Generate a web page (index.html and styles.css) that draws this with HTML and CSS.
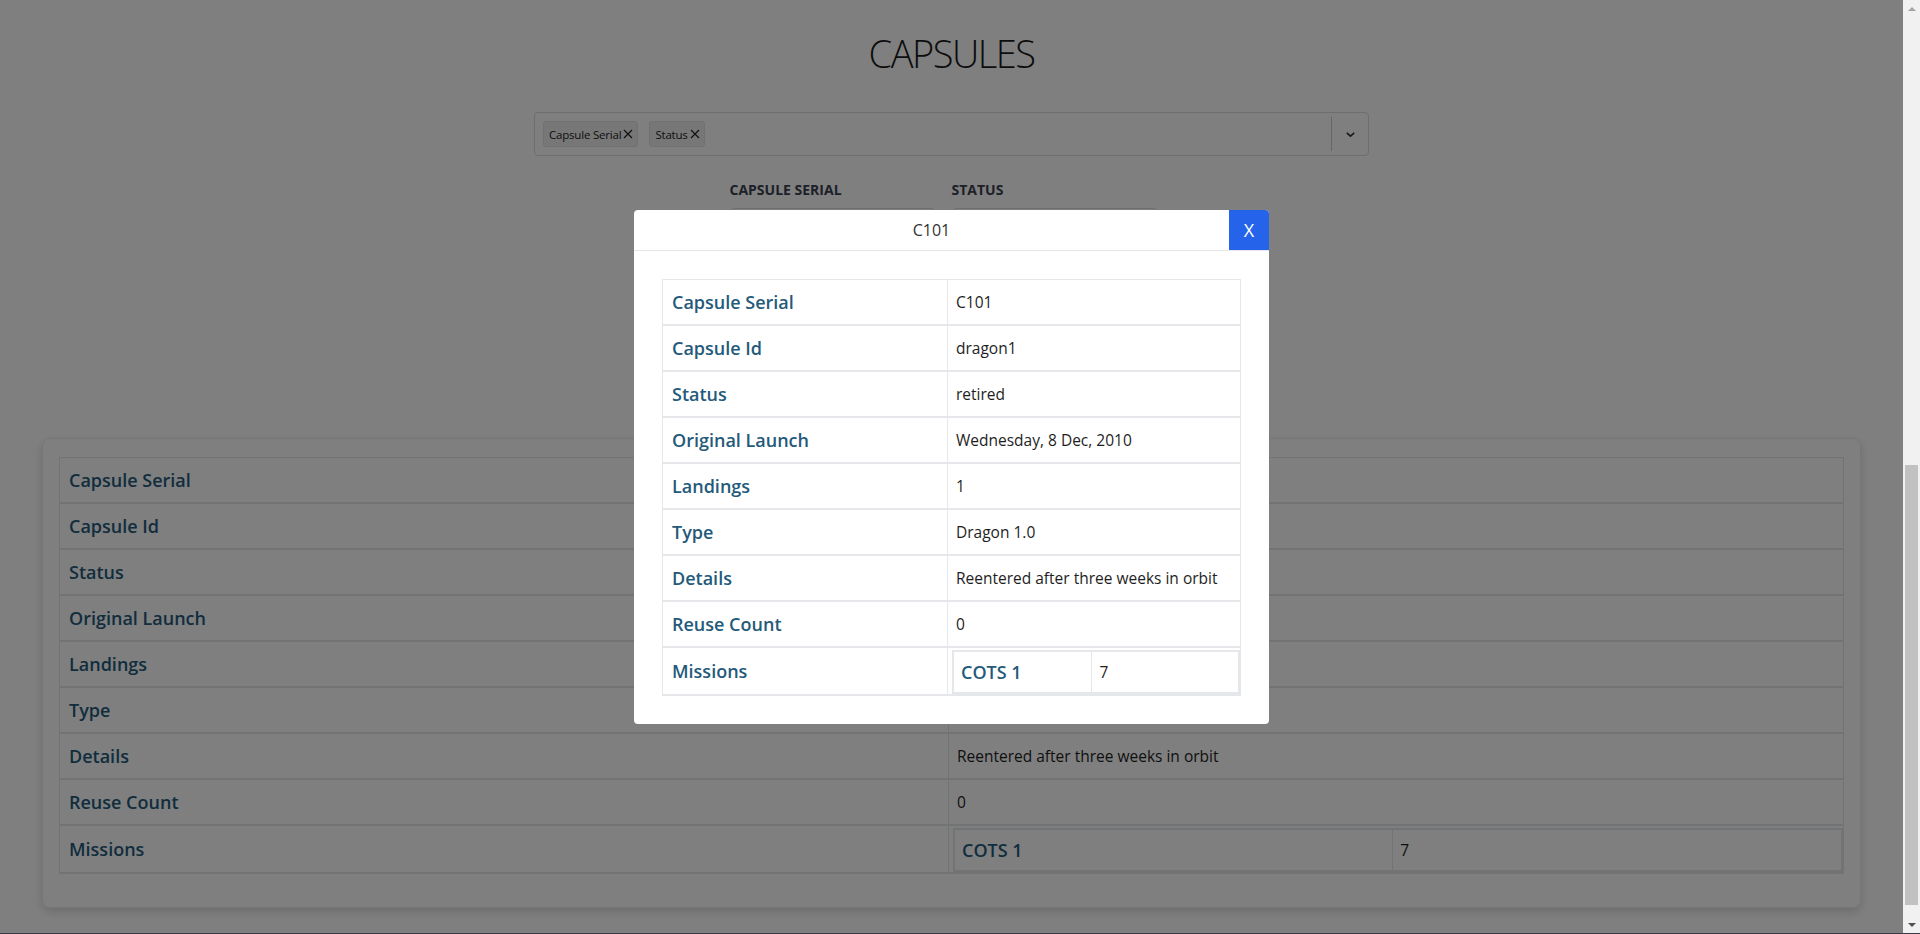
FILE: index.html
```html
<!DOCTYPE html>
<html lang="en">
<head>
<meta charset="utf-8">
<title>Capsules</title>
<link rel="stylesheet" href="styles.css">
</head>
<body>
<div class="screen">
  <div class="viewport">
    <main class="page">
      <h1 class="title">CAPSULES</h1>
      <div class="select">
        <div class="select-values">
          <span class="tag">Capsule Serial<svg class="tag-x" width="10" height="10" viewBox="0 0 10 10"><path d="M1 1L9 9M9 1L1 9"/></svg></span>
          <span class="tag">Status<svg class="tag-x" width="10" height="10" viewBox="0 0 10 10"><path d="M1 1L9 9M9 1L1 9"/></svg></span>
        </div>
        <div class="select-ind">
          <span class="sep"></span>
          <span class="chev"><svg width="9" height="5" viewBox="0 0 9 5"><path d="M0.8 0.8L4.5 4.2L8.2 0.8"/></svg></span>
        </div>
      </div>
      <div class="list">
        <div class="list-head">Capsule Serial</div>
        <div class="list-head">Status</div>
        <div class="list-cell">C101</div><div class="list-cell">retired</div>
        <div class="list-cell">C102</div><div class="list-cell">retired</div>
        <div class="list-cell">C103</div><div class="list-cell">retired</div>
        <div class="list-cell">C104</div><div class="list-cell">unknown</div>
      </div>
      <section class="card">
        <table class="detail">
          <tr><td class="lbl">Capsule Serial</td><td>C101</td></tr>
          <tr><td class="lbl">Capsule Id</td><td>dragon1</td></tr>
          <tr><td class="lbl">Status</td><td>retired</td></tr>
          <tr><td class="lbl">Original Launch</td><td>Wednesday, 8 Dec, 2010</td></tr>
          <tr><td class="lbl">Landings</td><td>1</td></tr>
          <tr><td class="lbl">Type</td><td>Dragon 1.0</td></tr>
          <tr><td class="lbl">Details</td><td>Reentered after three weeks in orbit</td></tr>
          <tr><td class="lbl">Reuse Count</td><td>0</td></tr>
          <tr><td class="lbl">Missions</td><td class="missions">
            <table class="nested"><tr><td class="nlbl">COTS 1</td><td class="nval">7</td></tr></table>
          </td></tr>
        </table>
      </section>
    </main>
    <div class="backdrop">
      <div class="modal">
        <div class="modal-head">
          <span class="modal-title">C101</span>
          <button class="modal-close" type="button">X</button>
        </div>
        <div class="modal-body">
          <table class="detail">
            <tr><td class="lbl">Capsule Serial</td><td>C101</td></tr>
            <tr><td class="lbl">Capsule Id</td><td>dragon1</td></tr>
            <tr><td class="lbl">Status</td><td>retired</td></tr>
            <tr><td class="lbl">Original Launch</td><td>Wednesday, 8 Dec, 2010</td></tr>
            <tr><td class="lbl">Landings</td><td>1</td></tr>
            <tr><td class="lbl">Type</td><td>Dragon 1.0</td></tr>
            <tr><td class="lbl">Details</td><td>Reentered after three weeks in orbit</td></tr>
            <tr><td class="lbl">Reuse Count</td><td>0</td></tr>
            <tr><td class="lbl">Missions</td><td class="missions">
              <table class="nested"><tr><td class="nlbl">COTS 1</td><td class="nval">7</td></tr></table>
            </td></tr>
          </table>
        </div>
      </div>
    </div>
  </div>
  <div class="scrollbar">
    <div class="sb-btn"><span class="tri-up"></span></div>
    <div class="sb-track"><div class="sb-thumb"></div></div>
    <div class="sb-btn"><span class="tri-down"></span></div>
  </div>
</div>
</body>
</html>
```

FILE: styles.css
```css
* { box-sizing: border-box; }
html, body { margin: 0; height: 100%; overflow: hidden; }
body {
  font-family: "Open Sans", "Noto Sans", sans-serif;
  background: #fff;
  color: #212121;
}
.screen {
  display: flex;
  height: 934px;
  border-bottom: 1px solid #3a3a48;
}
.viewport {
  flex: 1;
  position: relative;
  overflow: hidden;
  background: #fff;
}
.page {
  display: flex;
  flex-direction: column;
  align-items: center;
}
.title {
  margin: 30px 0 0;
  font-size: 38px;
  font-weight: 300;
  letter-spacing: -1.5px;
  line-height: 47px;
  color: #1a1a1a;
}
.select {
  margin-top: 35px;
  width: 835px;
  height: 44px;
  border: 1px solid #dcdcdc;
  border-radius: 4px;
  display: flex;
  align-items: center;
}
.select-values {
  flex: 1;
  display: flex;
  gap: 11px;
  padding-left: 8px;
}
.tag {
  display: inline-flex;
  align-items: center;
  gap: 2px;
  height: 26px;
  padding: 0 4px 0 5px;
  background: #eee;
  border: 1px solid #e2e2e2;
  border-radius: 3px;
  font-size: 11.5px;
  letter-spacing: -0.2px;
  color: #222;
}
.tag-x path { stroke: #222; stroke-width: 1.2; fill: none; }
.select-ind {
  display: flex;
  align-items: stretch;
  align-self: stretch;
  padding: 4px 0;
}
.sep { width: 1px; background: #ccc; }
.chev {
  width: 36px;
  display: flex;
  align-items: center;
  justify-content: center;
}
.chev path { stroke: #333; stroke-width: 1.6; fill: none; }
.list {
  margin-top: 24px;
  display: grid;
  grid-template-columns: 222px 222px;
  row-gap: 8px;
}
.list-head {
  font-size: 14px;
  font-weight: 700;
  text-transform: uppercase;
  color: #3a4150;
  line-height: 20px;
}
.list-cell {
  width: 206px;
  height: 38px;
  border: 1px solid #ddd;
  border-radius: 5px;
  padding: 8px 10px;
  font-size: 15px;
}
.card {
  align-self: stretch;
  margin: 54px 42px 0;
  padding: 18px 16px 33px;
  border: 1px solid #ececec;
  border-radius: 8px;
  box-shadow: 0 4px 10px rgba(0, 0, 0, 0.15);
}
.detail {
  width: 100%;
  table-layout: fixed;
  border-collapse: collapse;
}
.detail td {
  border: 1px solid #e5e7eb;
  border-bottom-width: 2px;
  padding: 10px 8px;
  line-height: 24px;
  font-size: 15.5px;
  color: #1e1e1e;
  text-align: left;
  vertical-align: middle;
}
.detail td.lbl,
.detail td.nlbl {
  padding-left: 9px;
  font-size: 18px;
  font-weight: 600;
  color: #245a7a;
}
.card .detail td.lbl { width: 889px; }
.modal .detail td.lbl { width: 285px; }
.detail td.missions { padding: 2px 0 0 4px; }
.nested {
  width: 100%;
  table-layout: fixed;
  border-collapse: collapse;
  border: 2px solid #e5e7eb;
}
.detail .nested td { padding: 8px 7px; border-bottom-width: 1px; }
.modal .detail .nested td.nlbl { width: 48.6%; }
.card .detail .nested td.nlbl { width: 49.4%; }
.backdrop {
  position: absolute;
  inset: 0;
  background: rgba(0, 0, 0, 0.5);
  display: flex;
  align-items: center;
  justify-content: center;
}
.modal {
  width: 635px;
  background: #fff;
  border-radius: 4px;
  overflow: hidden;
}
.modal-head {
  display: flex;
  height: 41px;
  border-bottom: 1px solid #e5e7eb;
}
.modal-title {
  flex: 1;
  text-align: center;
  line-height: 40px;
  font-size: 16px;
  color: #333;
}
.modal-close {
  width: 40px;
  height: 40px;
  border: 0;
  padding: 0;
  background: #2563eb;
  color: #fff;
  font-family: inherit;
  font-size: 18px;
}
.modal-body { padding: 28px 28px; }
.scrollbar {
  width: 17px;
  background: #f1f1f1;
  display: flex;
  flex-direction: column;
}
.sb-btn {
  height: 17px;
  display: flex;
  align-items: center;
  justify-content: center;
}
.tri-up {
  border-left: 4px solid transparent;
  border-right: 4px solid transparent;
  border-bottom: 4px solid #a3a3a3;
}
.tri-down {
  border-left: 4px solid transparent;
  border-right: 4px solid transparent;
  border-top: 4px solid #505050;
}
.sb-track {
  flex: 1;
  display: flex;
  flex-direction: column;
  justify-content: flex-end;
  padding: 0 2px 11px;
}
.sb-thumb { height: 440px; background: #c1c1c1; }
```
